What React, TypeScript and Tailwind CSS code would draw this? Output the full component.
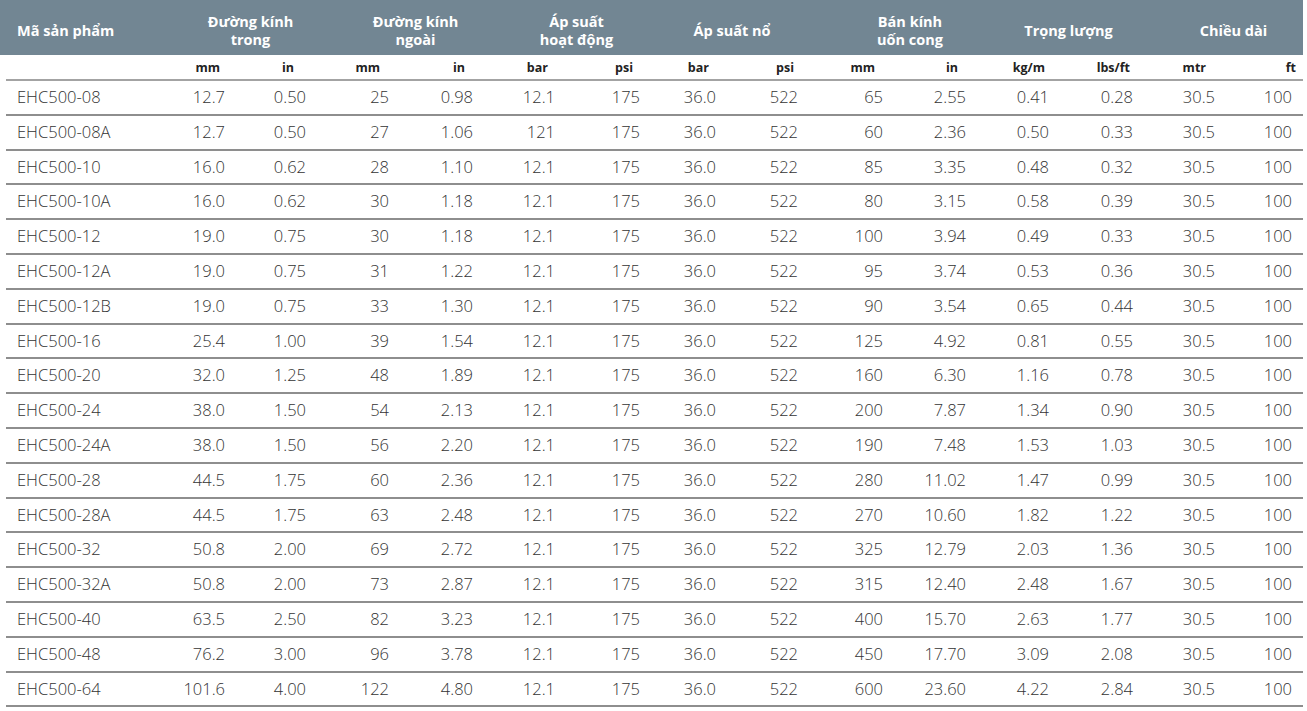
const rows: string[][] = [
  ["EHC500-08", "12.7", "0.50", "25", "0.98", "12.1", "175", "36.0", "522", "65", "2.55", "0.41", "0.28", "30.5", "100"],
  ["EHC500-08A", "12.7", "0.50", "27", "1.06", "121", "175", "36.0", "522", "60", "2.36", "0.50", "0.33", "30.5", "100"],
  ["EHC500-10", "16.0", "0.62", "28", "1.10", "12.1", "175", "36.0", "522", "85", "3.35", "0.48", "0.32", "30.5", "100"],
  ["EHC500-10A", "16.0", "0.62", "30", "1.18", "12.1", "175", "36.0", "522", "80", "3.15", "0.58", "0.39", "30.5", "100"],
  ["EHC500-12", "19.0", "0.75", "30", "1.18", "12.1", "175", "36.0", "522", "100", "3.94", "0.49", "0.33", "30.5", "100"],
  ["EHC500-12A", "19.0", "0.75", "31", "1.22", "12.1", "175", "36.0", "522", "95", "3.74", "0.53", "0.36", "30.5", "100"],
  ["EHC500-12B", "19.0", "0.75", "33", "1.30", "12.1", "175", "36.0", "522", "90", "3.54", "0.65", "0.44", "30.5", "100"],
  ["EHC500-16", "25.4", "1.00", "39", "1.54", "12.1", "175", "36.0", "522", "125", "4.92", "0.81", "0.55", "30.5", "100"],
  ["EHC500-20", "32.0", "1.25", "48", "1.89", "12.1", "175", "36.0", "522", "160", "6.30", "1.16", "0.78", "30.5", "100"],
  ["EHC500-24", "38.0", "1.50", "54", "2.13", "12.1", "175", "36.0", "522", "200", "7.87", "1.34", "0.90", "30.5", "100"],
  ["EHC500-24A", "38.0", "1.50", "56", "2.20", "12.1", "175", "36.0", "522", "190", "7.48", "1.53", "1.03", "30.5", "100"],
  ["EHC500-28", "44.5", "1.75", "60", "2.36", "12.1", "175", "36.0", "522", "280", "11.02", "1.47", "0.99", "30.5", "100"],
  ["EHC500-28A", "44.5", "1.75", "63", "2.48", "12.1", "175", "36.0", "522", "270", "10.60", "1.82", "1.22", "30.5", "100"],
  ["EHC500-32", "50.8", "2.00", "69", "2.72", "12.1", "175", "36.0", "522", "325", "12.79", "2.03", "1.36", "30.5", "100"],
  ["EHC500-32A", "50.8", "2.00", "73", "2.87", "12.1", "175", "36.0", "522", "315", "12.40", "2.48", "1.67", "30.5", "100"],
  ["EHC500-40", "63.5", "2.50", "82", "3.23", "12.1", "175", "36.0", "522", "400", "15.70", "2.63", "1.77", "30.5", "100"],
  ["EHC500-48", "76.2", "3.00", "96", "3.78", "12.1", "175", "36.0", "522", "450", "17.70", "3.09", "2.08", "30.5", "100"],
  ["EHC500-64", "101.6", "4.00", "122", "4.80", "12.1", "175", "36.0", "522", "600", "23.60", "4.22", "2.84", "30.5", "100"],
];

// group headers: label lines + nudge so they sit where the print has them
const groups = [
  { lines: ["Đường kính", "trong"], cls: "col-span-2 pl-[32px]" },
  { lines: ["Đường kính", "ngoài"], cls: "col-span-2 pl-[26px]" },
  { lines: ["Áp suất", "hoạt động"], cls: "col-span-2 pl-[14px]" },
  { lines: ["Áp suất nổ"], cls: "col-span-2" },
  { lines: ["Bán kính", "uốn cong"], cls: "col-span-2 pl-[30px]" },
  { lines: ["Trọng lượng"], cls: "col-span-2 pl-[12px]" },
  { lines: ["Chiều dài"], cls: "col-span-2 pl-[18px]" },
];

const units = [
  { t: "mm", cls: "pr-[18px]" },
  { t: "in", cls: "pr-[25px]" },
  { t: "mm", cls: "pr-[22px]" },
  { t: "in", cls: "pr-[21px]" },
  { t: "bar", cls: "pr-[20px]" },
  { t: "psi", cls: "pr-[20px]" },
  { t: "bar", cls: "pr-[20px]" },
  { t: "psi", cls: "pr-[17px]" },
  { t: "mm", cls: "pr-[21px]" },
  { t: "in", cls: "pr-[21px]" },
  { t: "kg/m", cls: "pr-[17px]" },
  { t: "lbs/ft", cls: "pr-[16px]" },
  { t: "mtr", cls: "pr-[22px]" },
  { t: "ft", cls: "pr-[7px]" },
];

const headCols =
  "grid grid-cols-[150px_88px_81px_83px_84px_82px_85px_76px_82px_85px_83px_83px_84px_82px_75px]";
const bodyCols =
  "grid grid-cols-[144px_88px_81px_83px_84px_82px_85px_76px_82px_85px_83px_83px_84px_82px_75px]";

export default function App() {
  return (
    <div className="w-[1307px] h-[711px] bg-white overflow-hidden font-['Open_Sans',sans-serif]">
      <div className="w-[1303px]">
        {/* tiêu đề nhóm */}
        <div className={`${headCols} h-[55px] pt-[6px] bg-[#728693] text-white font-bold text-[14.5px] leading-[18px]`}>
          <div className="flex items-center pl-[17px]">Mã sản phẩm</div>
          {groups.map((g, i) => (
            <div key={i} className={`${g.cls} flex flex-col items-center justify-center`}>
              {g.lines.map((l) => (
                <span key={l}>{l}</span>
              ))}
            </div>
          ))}
        </div>

        {/* đơn vị */}
        <div className="pl-[6px]">
          <div className={`${bodyCols} h-[26px] pt-[3px] border-b-2 border-[#a3a3a3] text-[12.5px] font-bold text-[#222]`}>
            <div />
            {units.map((u, i) => (
              <div key={i} className={`${u.cls} flex items-center justify-end`}>
                {u.t}
              </div>
            ))}
          </div>

          {rows.map((r) => (
            <div
              key={r[0]}
              className={`${bodyCols} h-[34.8px] border-b-2 border-[#8e8e8e] text-[16.5px] font-light text-[#333]`}
            >
              <div className="flex items-center pl-[11px]">{r[0]}</div>
              {r.slice(1).map((v, i) => (
                <div key={i} className={`flex items-center justify-end ${i === 13 ? "pr-[11px]" : "pr-[13px]"}`}>
                  {v}
                </div>
              ))}
            </div>
          ))}
        </div>
      </div>
    </div>
  );
}
